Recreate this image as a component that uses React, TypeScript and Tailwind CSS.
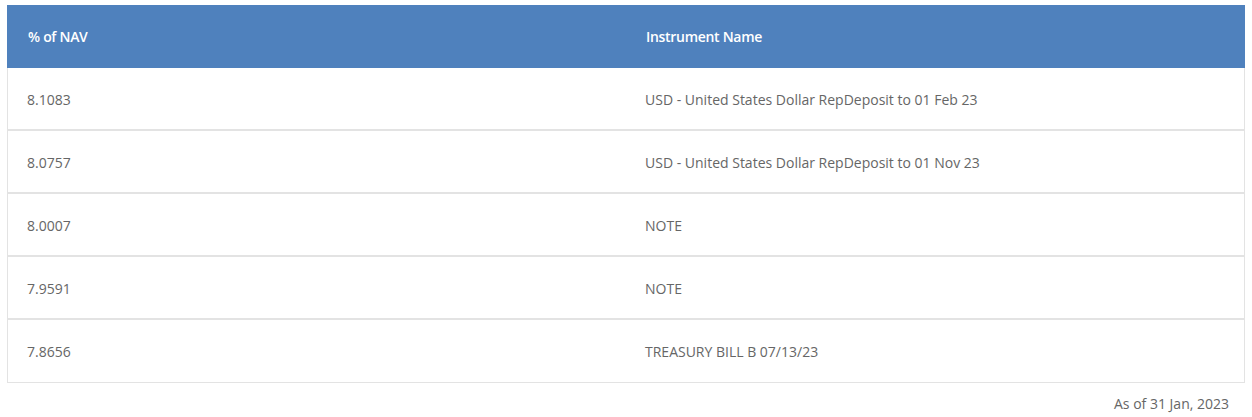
const rows = [
  { nav: '8.1083', name: 'USD - United States Dollar RepDeposit to 01 Feb 23' },
  { nav: '8.0757', name: 'USD - United States Dollar RepDeposit to 01 Nov 23' },
  { nav: '8.0007', name: 'NOTE' },
  { nav: '7.9591', name: 'NOTE' },
  { nav: '7.8656', name: 'TREASURY BILL B 07/13/23' },
];

export default function App() {
  return (
    <div className="min-h-screen bg-white pt-[5px] px-[7px] font-['Open_Sans',sans-serif] text-[14px] text-[#666]">
      {/* Holdings table */}
      <div className="border-x border-b border-[#e3e3e3]">
        <div className="grid grid-cols-2 h-[63px] items-center bg-[#4f81bd] text-white font-semibold tracking-[-0.3px] -mx-px">
          <div className="pl-[21px]">% of NAV</div>
          <div className="pl-[20px]">Instrument Name</div>
        </div>
        {rows.map((r, i) => (
          <div
            key={i}
            className={
              i < rows.length - 1
                ? 'grid grid-cols-2 h-[63px] items-center border-b-2 border-[#e3e3e3] pt-px'
                : 'grid grid-cols-2 h-[62px] items-center pt-px'
            }
          >
            <div className="pl-[19px]">{r.nav}</div>
            <div className="pl-[19px]">{r.name}</div>
          </div>
        ))}
      </div>
      <div className="text-right pr-[16px] pt-[10px]">As of 31 Jan, 2023</div>
    </div>
  );
}
